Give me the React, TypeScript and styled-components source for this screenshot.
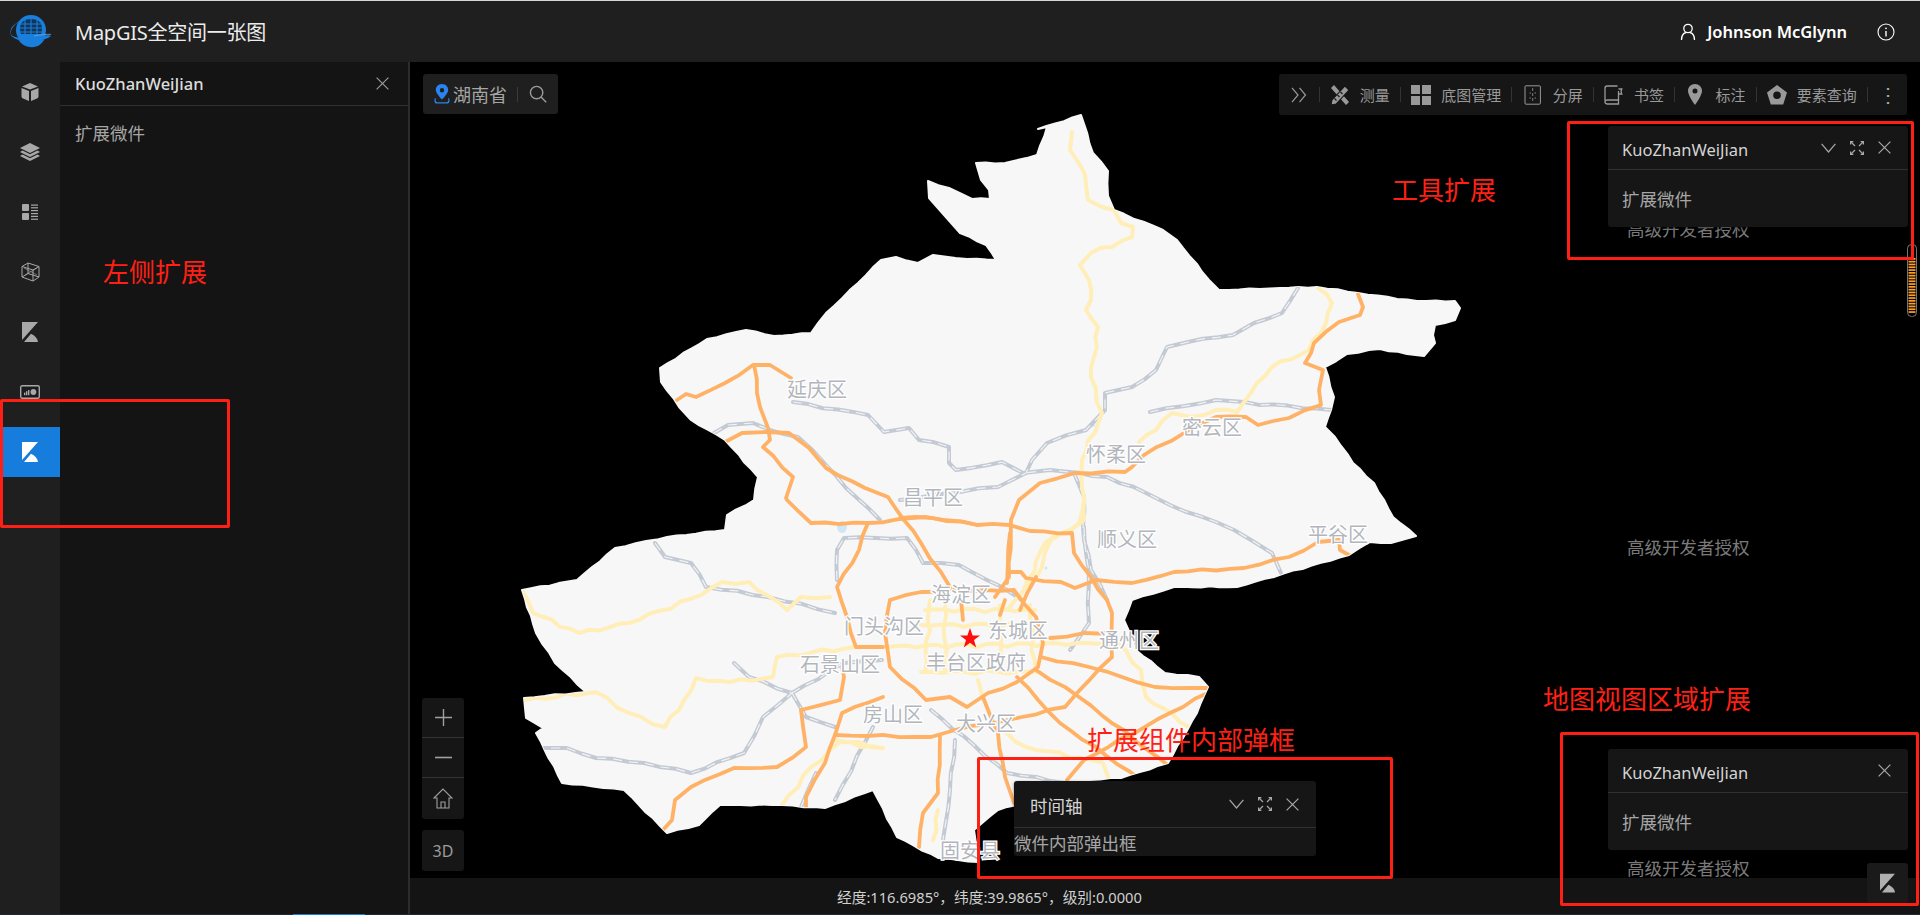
import React from "react";
import styled, { createGlobalStyle } from "styled-components";

const LAND =
  "1038,129 1081,115 1093,153 1108,171 1108,196 1114,210 1163,230 1177,240 1209,280 1219,290 1280,288 1317,287 1358,293 1417,301 1455,301 1460,308 1455,320 1435,325 1433,335 1435,343 1424,356 1407,354 1380,349 1347,354 1325,367 1334,397 1331,410 1325,427 1335,437 1353,463 1374,483 1393,517 1416,536 1391,543 1370,542 1349,555 1237,587 1174,587 1132,600 1124,620 1136,650 1165,673 1199,677 1208,687 1197,713 1168,763 1121,778 1090,780 1014,783 1017,805 998,810 974,830 978,862 938,858 897,837 873,790 825,808 782,805 720,805 699,825 667,833 624,790 562,783 536,733 543,728 526,718 524,698 586,692 555,663 536,633 522,590 577,580 615,548 667,537 725,530 727,515 754,500 758,477 725,440 691,420 679,407 661,382 660,368 707,339 746,330 774,336 811,333 826,313 858,283 881,260 896,257 918,263 933,255 967,259 996,260 986,245 960,233 944,215 929,198 928,181 949,188 972,199 990,199 989,190 981,180 976,163 1005,163 1037,155 1047,127";

const RAILS = [
  "1298,288 1282,313 1254,323 1233,335 1188,342 1167,347 1156,370 1132,387 1105,393 1105,410 1086,430 1047,443 1032,460 1026,473 998,487 960,492 900,500",
  "793,402 868,415 884,432 909,428 919,440 949,447 949,463 956,470 1002,462 1023,473 1050,470 1107,477 1146,493 1170,505 1216,522 1251,540 1272,553 1281,573",
  "1074,473 1084,497 1084,540 1091,570 1107,600",
  "714,433 728,425 753,423 770,430 798,437 826,465 846,488 880,520",
  "655,543 665,557 691,563 706,587 768,597 835,613",
  "734,663 749,677 792,693 763,717 744,753 691,773 644,763 596,758 567,748 543,748",
  "792,693 806,717 835,727",
  "792,693 844,663 882,660",
  "837,580 837,550 844,538 907,538 923,563 959,565 1002,587 1022,600",
  "955,740 950,790 943,840",
  "873,727 835,800",
  "931,710 1007,773 1065,783",
  "801,807 816,773",
  "1084,527 1089,583 1089,623 1070,650",
  "1150,412 1216,400 1331,410",
];

const YELLOW = [
  "1072,132 1070,150 1080,165 1086,185 1088,200 1102,207 1114,210 1121,223 1133,227 1132,237 1091,253 1080,265 1089,280 1091,300 1086,310 1098,327 1091,377 1102,413 1082,460 1082,487 1084,520 1051,540 1042,567 1019,597",
  "1318,288 1332,303 1326,323 1309,350 1272,367 1251,393 1237,412 1216,410 1191,417 1172,413 1156,430 1139,442",
  "522,590 533,613 579,633 629,623 701,595 722,582 749,582 787,610 801,597 830,597",
  "526,700 596,692 629,713 665,727 684,700 696,678 730,682 773,677 777,657 856,647 1117,643 1141,670 1146,697 1189,727",
  "835,740 883,748 840,742 811,767 782,805",
  "1084,500 1079,523 1045,543 1024,590 1007,610",
  "1007,733 1026,747 1103,763 1108,777",
  "978,680 983,700",
  "938,810 933,840",
  "925,610 1035,610",
  "921,625 1040,625",
  "921,672 1040,672",
  "930,600 925,672",
  "945,605 945,672",
  "1000,605 1000,672",
  "1030,605 1035,672",
];

const ORANGE = [
  "1358,294 1363,307 1360,315 1339,322 1314,343 1311,353 1305,363 1323,370 1319,390 1321,405 1289,418 1258,425 1246,417 1216,417 1184,433 1144,455 1132,467 1125,472 1075,473 1040,483 1019,500 1011,520 1009,577 995,597",
  "900,518 932,518 977,525 1009,525 1030,531 1072,533 1074,553 1091,577 1107,600 1112,613 1112,657 1077,693 1065,707 1022,717 955,730 931,737 835,735",
  "1009,572 1021,572 1026,578 1061,582 1075,588 1096,580 1132,583 1174,572 1244,568 1289,557 1318,542 1339,540 1340,550 1349,555",
  "677,400 686,394 696,397 725,383 753,365 770,365 791,378",
  "754,365 760,407 768,428 770,440 763,447 793,477 786,498 787,500 811,523 868,523 926,517 978,525",
  "725,442 742,433 767,432 789,433 809,448 826,468 865,488 888,497 921,543 950,587",
  "868,523 859,550 837,587 847,617 856,647 883,647",
  "890,600 921,592 985,590 1014,590 1036,617 1043,643 1038,667 1017,682 988,693 967,707 950,697 926,700 890,667 885,633 890,600",
  "835,735 842,713 883,697",
  "801,710 840,700 844,677 842,667",
  "801,710 806,747 777,767 734,768 691,787 675,800 672,820 663,830",
  "835,735 825,763 806,797 806,808",
  "940,737 938,793 923,813 919,847",
  "983,697 998,733 1005,777 1014,803",
  "1036,670 1079,697 1170,767",
  "1017,677 1060,723 1141,780",
  "1041,657 1089,667 1155,687 1208,688",
  "1208,693 1170,713 1084,760 1067,780",
  "1050,638 1084,633 1112,633",
  "1010,533 1007,583",
  "1036,577 1020,610",
  "961,600 963,620",
  "1005,600 1000,615",
];

const LABELS = [
  { text: "延庆区", x: 817, y: 388 },
  { text: "昌平区", x: 933, y: 496 },
  { text: "怀柔区", x: 1116, y: 453 },
  { text: "密云区", x: 1212, y: 426 },
  { text: "顺义区", x: 1127, y: 538 },
  { text: "平谷区", x: 1338, y: 533 },
  { text: "海淀区", x: 961, y: 593 },
  { text: "门头沟区", x: 884, y: 625 },
  { text: "东城区", x: 1018, y: 629 },
  { text: "通州区", x: 1129, y: 639 },
  { text: "石景山区", x: 840, y: 663 },
  { text: "丰台区政府", x: 976, y: 661 },
  { text: "房山区", x: 893, y: 713 },
  { text: "大兴区", x: 986, y: 722 },
  { text: "固安县", x: 970, y: 849 },
];

const TOOLS = [
  { label: "测量", icon: "measure" },
  { label: "底图管理", icon: "basemap" },
  { label: "分屏", icon: "split" },
  { label: "书签", icon: "bookmark" },
  { label: "标注", icon: "pin" },
  { label: "要素查询", icon: "query" },
];

const wiggle = (points: string, amp: number, step: number): string => {
  const pts = points.split(" ").map((p) => p.split(",").map(Number));
  const out: string[] = [];
  pts.forEach((pt, i) => {
    out.push(`${pt[0]},${pt[1]}`);
    const next = pts[i + 1];
    if (!next) return;
    const dx = next[0] - pt[0];
    const dy = next[1] - pt[1];
    const len = Math.hypot(dx, dy);
    const n = Math.floor(len / step);
    for (let k = 1; k < n; k++) {
      const t = k / n;
      const off = amp * Math.sin(pt[0] * 0.7 + pt[1] * 1.3 + k * 2.1) * Math.sin(Math.PI * t);
      out.push(`${(pt[0] + dx * t - (dy / len) * off).toFixed(1)},${(pt[1] + dy * t + (dx / len) * off).toFixed(1)}`);
    }
  });
  return out.join(" ");
};

const LAND_PATH = wiggle(LAND, 0.7, 9);
const RAIL_PATHS = RAILS.map((p) => wiggle(p, 1.2, 14));
const YELLOW_PATHS = YELLOW.map((p) => wiggle(p, 2.2, 10));
const ORANGE_PATHS = ORANGE.map((p) => wiggle(p, 1.2, 14));

const KIcon = ({ w = 16, h = 20 }: { w?: number; h?: number }) => (
  <svg width={w} height={h} viewBox="0 0 16 20" fill="currentColor">
    <path d="M0 0H16L0 18Z" />
    <path d="M2 20L9 11.8C13 13.6 15.6 16.4 16 20Z" />
  </svg>
);

const CubeIcon = () => (
  <svg width="18" height="18" viewBox="0 0 18 18" fill="currentColor">
    <path d="M9 0L17 3.4L9 6.6L1 3.4Z" />
    <path d="M0.5 5L8 8V18L2 15.6Q0.5 15 0.5 13.6Z" />
    <path d="M17.5 5L10 8V18L16 15.6Q17.5 15 17.5 13.6Z" />
  </svg>
);

const LayersIcon = () => (
  <svg width="20" height="18" viewBox="0 0 20 18" fill="currentColor">
    <path d="M10 0L20 5L10 10L0 5Z" />
    <path d="M2.5 7.4L10 11.2L17.5 7.4L20 9L10 14L0 9Z" />
    <path d="M2.5 11.4L10 15.2L17.5 11.4L20 13L10 18L0 13Z" />
  </svg>
);

const ListIcon = () => (
  <svg width="16" height="16" viewBox="0 0 16 16" fill="currentColor">
    <rect x="0" y="0" width="7" height="7" rx="1" />
    <rect x="0" y="9" width="7" height="7" rx="1" />
    <rect x="9" y="0.5" width="7" height="1.2" />
    <rect x="9" y="3.2" width="7" height="1.2" />
    <rect x="9" y="6" width="7" height="1.2" />
    <rect x="9" y="9" width="7" height="1.2" />
    <rect x="9" y="11.8" width="7" height="1.2" />
    <rect x="9" y="14.6" width="7" height="1.2" />
  </svg>
);

const WireCubeIcon = () => (
  <svg width="19" height="20" viewBox="0 0 19 20" fill="none" stroke="currentColor" strokeWidth="1">
    <path d="M7 1L18 4.5V15L12 19L1 15V4.5Z" />
    <path d="M1 4.5L12 8V19M12 8L18 4.5" />
    <path d="M7 1V11.5L1 15M7 11.5L18 15" />
    <path d="M3 6L16 13M16 6L4 13" strokeWidth="0.6" />
  </svg>
);

const CardIcon = () => (
  <svg width="20" height="14" viewBox="0 0 20 14" fill="currentColor">
    <rect x="0.7" y="0.7" width="18.6" height="12.6" rx="1.5" fill="#1c1c1c" stroke="currentColor" strokeWidth="1.4" />
    <rect x="4" y="7.6" width="1.4" height="2.6" />
    <rect x="6" y="6.2" width="1.4" height="4" />
    <rect x="8" y="5" width="1.4" height="5.2" />
    <circle cx="13.4" cy="7" r="2.9" />
  </svg>
);

const LogoIcon = () => (
  <svg width="42" height="34" viewBox="0 0 42 34">
    <circle cx="21" cy="15" r="15" fill="#1a7fdc" />
    <path d="M10 13C10 7 15 4 21 4S32 7 32 13C32 17 31 19 31 19H11S10 17 10 13Z" fill="#12365a" />
    <g stroke="#1a7fdc" strokeWidth="1.1">
      <path d="M10 9H32M10 13H32M10 17H32" />
      <path d="M15 4V20M21 3V20M27 4V20" />
    </g>
    <path d="M12 5C4 9 0 15 1 19C2 22 10 24 20 23C30 22 38 19 41 21C36 25 26 27 16 26C6 25 -2 22 1 14C2 11 7 7 12 5Z" fill="#1a7fdc" />
    <path d="M8 24C14 29 30 28 35 23C32 30 26 33 20 32C15 32 10 28 8 24Z" fill="#1a7fdc" />
    <path d="M24 21C30 20 36 19 41 19.4" stroke="#6aa8de" strokeWidth="0.8" fill="none" />
  </svg>
);

const UserIcon = () => (
  <svg width="16" height="18" viewBox="0 0 16 18" fill="none" stroke="#fff" strokeWidth="1.3">
    <circle cx="8" cy="5.5" r="4.2" />
    <path d="M1.5 17C1.5 12.5 4 10 6 9.5M14.5 17C14.5 12.5 12 10 10 9.5" />
  </svg>
);

const InfoIcon = () => (
  <svg width="18" height="18" viewBox="0 0 18 18" fill="none" stroke="#fff" strokeWidth="1.1">
    <circle cx="9" cy="9" r="8" />
    <path d="M9 8V13.5" strokeWidth="1.4" />
    <circle cx="9" cy="5.3" r="0.9" fill="#fff" stroke="none" />
  </svg>
);

const CloseIcon = ({ size = 13 }: { size?: number }) => (
  <svg width={size} height={size} viewBox="0 0 13 13" fill="none" stroke="currentColor" strokeWidth="1.2">
    <path d="M0.6 0.6L12.4 12.4M12.4 0.6L0.6 12.4" />
  </svg>
);

const ChevronIcon = ({ w = 15 }: { w?: number }) => (
  <svg width={w} height="10" viewBox="0 0 15 10" fill="none" stroke="currentColor" strokeWidth="1.2">
    <path d="M0.6 0.8L7.5 9L14.4 0.8" />
  </svg>
);

const ExpandIcon = () => (
  <svg width="14" height="14" viewBox="0 0 14 14" fill="none" stroke="currentColor" strokeWidth="1.2">
    <path d="M1 1L5 5M13 1L9 5M1 13L5 9M13 13L9 9" />
    <path d="M0.6 3.4V0.6H3.4M10.6 0.6H13.4V3.4M0.6 10.6V13.4H3.4M10.6 13.4H13.4V10.6" />
  </svg>
);

const PinBlueIcon = () => (
  <svg width="16" height="20" viewBox="0 0 16 20" fill="#2a84f0">
    <path fillRule="evenodd" d="M8 0C4 0 1.8 3 1.8 6C1.8 9.6 8 15.5 8 15.5S14.2 9.6 14.2 6C14.2 3 12 0 8 0ZM8 4A2.2 2.2 0 1 1 8 8.4A2.2 2.2 0 1 1 8 4Z" />
    <path d="M1 14C0 16 0 19.6 3 19.6H13C16 19.6 16 16 15 14L14 14.6C14.8 16 14.6 18.2 12.6 18.2H3.4C1.4 18.2 1.2 16 2 14.6Z" />
  </svg>
);

const SearchIcon = () => (
  <svg width="18" height="18" viewBox="0 0 18 18" fill="none" stroke="currentColor" strokeWidth="1.4">
    <circle cx="7.6" cy="7.6" r="6.2" />
    <path d="M12 12L17.2 17.2" />
  </svg>
);

const DoubleChevronIcon = () => (
  <svg width="16" height="16" viewBox="0 0 16 16" fill="none" stroke="currentColor" strokeWidth="1.2">
    <path d="M1 0.8L7 8L1 15.2M8.5 0.8L14.5 8L8.5 15.2" />
  </svg>
);

const ToolIcon = ({ name }: { name: string }) => {
  switch (name) {
    case "measure":
      return (
        <svg width="20" height="22" viewBox="0 0 20 22" fill="currentColor">
          <path d="M1 4L4 1L19 18L16 21Z" />
          <path d="M15 2L19 6L6 20L1 21L2 16Z" stroke="#161616" strokeWidth="1.1" />
          <path d="M4.5 14.5L6.5 16.5M7.5 11L9.5 13M10.5 8L12.5 10" stroke="#161616" strokeWidth="1.1" />
        </svg>
      );
    case "basemap":
      return (
        <svg width="20" height="20" viewBox="0 0 20 20" fill="currentColor">
          <rect width="9" height="9" />
          <rect x="11" width="9" height="9" />
          <rect y="11" width="9" height="9" />
          <rect x="11" y="11" width="9" height="9" />
        </svg>
      );
    case "split":
      return (
        <svg width="18" height="20" viewBox="0 0 18 20" fill="none" stroke="currentColor" strokeWidth="1">
          <rect x="1" y="0.8" width="15.4" height="18.4" rx="1" />
          <path d="M8.7 3V6M8.7 8V11M8.7 13V16M5.5 8H7M10.5 8H12M5.5 13H7M10.5 13H12" strokeWidth="0.8" />
        </svg>
      );
    case "bookmark":
      return (
        <svg width="20" height="20" viewBox="0 0 20 20" fill="none" stroke="currentColor" strokeWidth="1.3">
          <path d="M13.5 1H3.2Q1 1 1 3.2V16.5Q1 19 3.5 19H14.5V15H3.5Q1 15 1 16.8" />
          <path d="M14.5 15V6M14.5 4H17.8L17 6.5L17.8 9H14.5" />
        </svg>
      );
    case "pin":
      return (
        <svg width="14" height="21" viewBox="0 0 14 21" fill="currentColor">
          <path fillRule="evenodd" d="M7 0C3 0 0 3 0 7C0 11.5 7 21 7 21S14 11.5 14 7C14 3 11 0 7 0ZM7 4.5A2.5 2.5 0 1 1 7 9.5A2.5 2.5 0 1 1 7 4.5Z" />
        </svg>
      );
    default:
      return (
        <svg width="20" height="20" viewBox="0 0 20 20" fill="currentColor">
          <path fillRule="evenodd" d="M10 0L20 7.4L16.2 19.6H3.8L0 7.4ZM10 6.4A3.8 3.8 0 1 0 10 14A3.8 3.8 0 1 0 10 6.4Z" />
        </svg>
      );
  }
};

const Annotation = ({ children, x, y }: { children: string; x: number; y: number }) => (
  <RedLabel $x={x} $y={y}>
    {children}
  </RedLabel>
);

const App: React.FC = () => {
  return (
    <Page>
      <GlobalStyle />
      <Header>
        <LogoSlot>
          <LogoIcon />
        </LogoSlot>
        <AppTitle>MapGIS全空间一张图</AppTitle>
        <UserBox>
          <UserIcon />
          <UserName>Johnson McGlynn</UserName>
          <InfoIcon />
        </UserBox>
      </Header>
      <Body>
        <Rail>
          <RailItem><CubeIcon /></RailItem>
          <RailItem><LayersIcon /></RailItem>
          <RailItem><ListIcon /></RailItem>
          <RailItem><WireCubeIcon /></RailItem>
          <RailItem><KIcon /></RailItem>
          <RailItem><CardIcon /></RailItem>
          <RailItem $active><KIcon /></RailItem>
        </Rail>
        <SidePanel>
          <SideHead>
            <SideTitle>KuoZhanWeiJian</SideTitle>
            <CloseIcon />
          </SideHead>
          <SideBody>扩展微件</SideBody>
        </SidePanel>
        <MapArea>
          <MapSvg width="1510" height="816" viewBox="410 62 1510 816">
            <defs>
              <clipPath id="land">
                <polygon points={LAND_PATH} />
              </clipPath>
            </defs>
            <polygon points={LAND_PATH} fill="#f7f7f8" stroke="#f7f7f8" strokeLinejoin="round" strokeWidth="2" />
            <g clipPath="url(#land)" fill="none" strokeLinejoin="round" strokeLinecap="round">
              <ellipse cx="842" cy="527" rx="5" ry="6" fill="#cfe6f5" />
              <circle cx="1046" cy="568" r="1.5" fill="#cfe6f5" />
              <circle cx="1093" cy="425" r="2" fill="#cfe6f5" />
              {RAIL_PATHS.map((p) => (
                <polyline key={p} points={p} stroke="#c4cad3" strokeWidth="4" />
              ))}
              {RAIL_PATHS.map((p) => (
                <polyline key={p} points={p} stroke="#f2f3f5" strokeWidth="1.2" strokeDasharray="9 7" strokeLinecap="butt" />
              ))}
              {YELLOW_PATHS.map((p) => (
                <polyline key={p} points={p} stroke="#ffeeb8" strokeWidth="4" />
              ))}
              {ORANGE_PATHS.map((p) => (
                <polyline key={p} points={p} stroke="#ffb266" strokeWidth="3.8" />
              ))}
            </g>
            {LABELS.map((l) => (
              <MapLabel key={l.text} x={l.x} y={l.y}>
                {l.text}
              </MapLabel>
            ))}
            <polygon
              points="970,628 972.6,635.4 980,635.4 974,640 976.2,647.4 970,642.8 963.8,647.4 966,640 960,635.4 967.4,635.4"
              fill="#ff0d0d"
            />
          </MapSvg>

          <Watermark $top={155}>高级开发者授权</Watermark>
          <Watermark $top={473}>高级开发者授权</Watermark>
          <Watermark $top={794}>高级开发者授权</Watermark>

          <SearchBox>
            <PinBlueIcon />
            <RegionName>湖南省</RegionName>
            <SearchDivider />
            <SearchIcon />
          </SearchBox>

          <Toolbar>
            <ToolEdge $w={40}><DoubleChevronIcon /></ToolEdge>
            {TOOLS.map((t) => (
              <React.Fragment key={t.label}>
                <ToolSep />
                <ToolItem>
                  <ToolGlyph><ToolIcon name={t.icon} /></ToolGlyph>
                  {t.label}
                </ToolItem>
              </React.Fragment>
            ))}
            <ToolSep />
            <ToolEdge $w={39}><Dots>⋮</Dots></ToolEdge>
          </Toolbar>

          <ScaleBar>
            <svg width="10" height="73" viewBox="0 0 10 73">
              <rect x="0.5" y="0.5" width="9" height="72" rx="4" fill="#000" stroke="#777" />
              {Array.from({ length: 20 }).map((_, i) => (
                <rect key={i} x="1.5" y={14 + i * 2.8} width="7" height="1.7" fill="#ffa02b" />
              ))}
            </svg>
          </ScaleBar>

          <FloatPanel $left={1198} $top={64} $w={300}>
            <FloatHead $h={44}>
              <FloatTitle $size={16.5}>KuoZhanWeiJian</FloatTitle>
              <HeadIcons>
                <ChevronIcon />
                <ExpandIcon />
                <CloseIcon />
              </HeadIcons>
            </FloatHead>
            <FloatBody $h={57}>扩展微件</FloatBody>
          </FloatPanel>

          <FloatPanel $left={1198} $top={687} $w={300}>
            <FloatHead $h={44}>
              <FloatTitle $size={16.5}>KuoZhanWeiJian</FloatTitle>
              <HeadIcons>
                <CloseIcon />
              </HeadIcons>
            </FloatHead>
            <FloatBody $h={57}>扩展微件</FloatBody>
          </FloatPanel>

          <FloatPanel $left={604} $top={719} $w={302}>
            <FloatHead $h={47} $inset={16}>
              <FloatTitle $size={17.5}>时间轴</FloatTitle>
              <HeadIcons>
                <ChevronIcon />
                <ExpandIcon />
                <CloseIcon />
              </HeadIcons>
            </FloatHead>
            <FloatBody $h={28} $flush>微件内部弹出框</FloatBody>
          </FloatPanel>

          <ZoomGroup>
            <ZoomCell $h={39}>
              <svg width="17" height="17" viewBox="0 0 17 17" stroke="currentColor" strokeWidth="1.4">
                <path d="M8.5 0V17M0 8.5H17" />
              </svg>
            </ZoomCell>
            <ZoomCell $h={40} $divided>
              <svg width="17" height="3" viewBox="0 0 17 3" stroke="currentColor" strokeWidth="1.6">
                <path d="M0 1.5H17" />
              </svg>
            </ZoomCell>
            <ZoomCell $h={42} $divided>
              <svg width="20" height="21" viewBox="0 0 20 21" fill="none" stroke="currentColor" strokeWidth="1.1">
                <path d="M1 10L10 1L19 10H16V20H4V10Z" />
                <path d="M8 20V14H12V20" />
              </svg>
            </ZoomCell>
          </ZoomGroup>
          <ThreeDButton>3D</ThreeDButton>
          <CornerButton><KIcon w={15} h={20} /></CornerButton>

          <StatusBar>经度:116.6985°，纬度:39.9865°，级别:0.0000</StatusBar>
        </MapArea>
      </Body>
      <EdgeStrip>
        <EdgeMark />
      </EdgeStrip>

      <RedBox $x={0} $y={399} $w={230} $h={129} />
      <RedBox $x={1567} $y={121} $w={347} $h={139} />
      <RedBox $x={1560} $y={732} $w={359} $h={174} />
      <RedBox $x={977} $y={757} $w={416} $h={122} />
      <Annotation x={103} y={255}>左侧扩展</Annotation>
      <Annotation x={1392} y={173}>工具扩展</Annotation>
      <Annotation x={1543} y={682}>地图视图区域扩展</Annotation>
      <Annotation x={1087} y={723}>扩展组件内部弹框</Annotation>
    </Page>
  );
};

export default App;

const GlobalStyle = createGlobalStyle`
  html, body {
    margin: 0;
    padding: 0;
    background: #000;
    overflow: hidden;
  }
  * {
    box-sizing: border-box;
  }
`;

const Page = styled.div`
  position: relative;
  width: 1920px;
  height: 915px;
  display: flex;
  flex-direction: column;
  border-top: 1px solid #d6d6d6;
  overflow: hidden;
  font-family: "Noto Sans", "Noto Sans CJK SC", sans-serif;
`;

const Header = styled.header`
  height: 61px;
  flex: none;
  display: flex;
  align-items: center;
  background: #1f1f1f;
`;

const LogoSlot = styled.div`
  width: 75px;
  padding-left: 10px;
  display: flex;
  align-items: center;
`;

const AppTitle = styled.div`
  font-size: 20px;
  letter-spacing: -0.25px;
  color: #ececec;
  white-space: nowrap;
`;

const UserBox = styled.div`
  margin-left: auto;
  padding-right: 25px;
  display: flex;
  align-items: center;
  color: #fff;
`;

const UserName = styled.span`
  font-size: 16.5px;
  font-weight: 600;
  margin: 0 30px 0 11px;
  white-space: nowrap;
`;

const Body = styled.div`
  flex: 1;
  min-height: 0;
  display: flex;
`;

const Rail = styled.nav`
  width: 60px;
  flex: none;
  padding-top: 5px;
  display: flex;
  flex-direction: column;
  gap: 10px;
  background: #1f1f1f;
`;

const RailItem = styled.div<{ $active?: boolean }>`
  height: 50px;
  display: flex;
  align-items: center;
  justify-content: center;
  color: ${(p) => (p.$active ? "#fff" : "#a8a8a8")};
  background: ${(p) => (p.$active ? "#177ddc" : "transparent")};
`;

const SidePanel = styled.aside`
  width: 350px;
  flex: none;
  background: #141414;
  border-right: 2px solid #2c2c2c;
`;

const SideHead = styled.div`
  height: 44px;
  padding: 0 19px 0 15px;
  display: flex;
  align-items: center;
  justify-content: space-between;
  border-bottom: 1px solid #303030;
  color: #999;
`;

const SideTitle = styled.div`
  font-size: 16.5px;
  font-weight: 500;
  color: #dcdcdc;
`;

const SideBody = styled.div`
  padding: 15px 15px;
  font-size: 17.5px;
  line-height: 24px;
  color: #a6a6a6;
`;

const MapArea = styled.main`
  position: relative;
  flex: 1;
  min-width: 0;
  display: flex;
  flex-direction: column;
  justify-content: flex-end;
  background: #000;
`;

const MapSvg = styled.svg`
  position: absolute;
  top: 0;
  left: 0;
`;

const MapLabel = styled.text`
  font-family: "Noto Sans CJK SC", sans-serif;
  font-size: 20px;
  text-anchor: middle;
  dominant-baseline: central;
  fill: #b2b6bc;
  stroke: #fff;
  stroke-width: 2.5px;
  paint-order: stroke;
`;

const StatusBar = styled.footer`
  height: 36px;
  flex: none;
  padding-left: 427px;
  display: flex;
  align-items: center;
  background: #141414;
  color: #d0d0d0;
  font-size: 14.7px;
  white-space: nowrap;
`;

const EdgeStrip = styled.div`
  height: 1px;
  flex: none;
  background: #1d2a33;
`;

const EdgeMark = styled.div`
  width: 72px;
  height: 1px;
  margin-left: 293px;
  background: #177ddc;
`;

const Watermark = styled.div<{ $top: number }>`
  position: absolute;
  left: 1217px;
  top: ${(p) => p.$top}px;
  font-size: 17.5px;
  line-height: 24px;
  color: #7a7a7a;
  white-space: nowrap;
`;

const SearchBox = styled.div`
  position: absolute;
  left: 13px;
  top: 12px;
  width: 135px;
  height: 40px;
  padding-left: 11px;
  display: flex;
  align-items: center;
  background: #1f1f1f;
  border-radius: 3px;
  color: #9c9c9c;
`;

const RegionName = styled.span`
  margin-left: 3px;
  font-size: 18px;
  color: #a6a6a6;
`;

const SearchDivider = styled.span`
  width: 1px;
  height: 15px;
  margin: 0 11px 0 10px;
  background: #3a3a3a;
`;

const Toolbar = styled.div`
  position: absolute;
  right: 13px;
  top: 12px;
  height: 41px;
  display: flex;
  align-items: center;
  background: #161616;
  border-radius: 3px;
  color: #999;
`;

const ToolEdge = styled.div<{ $w: number }>`
  width: ${(p) => p.$w}px;
  display: flex;
  justify-content: center;
  align-items: center;
`;

const Dots = styled.span`
  font-size: 20px;
  line-height: 1;
  color: #aaa;
`;

const ToolSep = styled.span`
  width: 1px;
  height: 15px;
  flex: none;
  background: #333;
`;

const ToolItem = styled.div`
  padding: 0 10.2px;
  display: flex;
  align-items: center;
  gap: 10px;
  font-size: 15px;
  white-space: nowrap;
`;

const ToolGlyph = styled.span`
  width: 20px;
  height: 22px;
  display: flex;
  align-items: center;
  justify-content: center;
`;

const ScaleBar = styled.div`
  position: absolute;
  left: 1497px;
  top: 182px;
  line-height: 0;
`;

const FloatPanel = styled.section<{ $left: number; $top: number; $w: number }>`
  position: absolute;
  left: ${(p) => p.$left}px;
  top: ${(p) => p.$top}px;
  width: ${(p) => p.$w}px;
  background: #161616;
  border-radius: 3px;
  box-shadow: 0 1px 3px rgba(0, 0, 0, 0.5);
`;

const FloatHead = styled.div<{ $h: number; $inset?: number }>`
  height: ${(p) => p.$h}px;
  padding: 3px 17px 0 ${(p) => p.$inset ?? 14}px;
  display: flex;
  align-items: center;
  justify-content: space-between;
  border-bottom: 1px solid #303030;
`;

const FloatTitle = styled.div<{ $size: number }>`
  font-size: ${(p) => p.$size}px;
  color: #d4d4d4;
  white-space: nowrap;
`;

const HeadIcons = styled.div`
  display: flex;
  align-items: center;
  gap: 14px;
  margin-top: -3px;
  color: #a8a8a8;
`;

const FloatBody = styled.div<{ $h: number; $flush?: boolean }>`
  height: ${(p) => p.$h}px;
  padding-left: ${(p) => (p.$flush ? 0 : 14)}px;
  display: flex;
  align-items: center;
  font-size: 17.5px;
  color: #a6a6a6;
  white-space: nowrap;
`;

const ZoomGroup = styled.div`
  position: absolute;
  left: 12px;
  top: 636px;
  width: 42px;
  background: #161616;
  border-radius: 3px;
  color: #a0a0a0;
`;

const ZoomCell = styled.div<{ $h: number; $divided?: boolean }>`
  height: ${(p) => p.$h}px;
  display: flex;
  align-items: center;
  justify-content: center;
  border-top: ${(p) => (p.$divided ? "1px solid #333" : "none")};
`;

const ThreeDButton = styled.div`
  position: absolute;
  left: 12px;
  top: 768px;
  width: 42px;
  height: 41px;
  display: flex;
  align-items: center;
  justify-content: center;
  background: #161616;
  border-radius: 3px;
  font-size: 16px;
  color: #9c9c9c;
`;

const CornerButton = styled.div`
  position: absolute;
  left: 1457px;
  top: 801px;
  width: 41px;
  height: 40px;
  display: flex;
  align-items: center;
  justify-content: center;
  background: #1a1a1a;
  border-radius: 3px;
  color: #b0b0b0;
`;

const RedBox = styled.div<{ $x: number; $y: number; $w: number; $h: number }>`
  position: absolute;
  left: ${(p) => p.$x}px;
  top: ${(p) => p.$y - 1}px;
  width: ${(p) => p.$w}px;
  height: ${(p) => p.$h}px;
  border: 3px solid #ff2015;
  border-radius: 2px;
  pointer-events: none;
`;

const RedLabel = styled.div<{ $x: number; $y: number }>`
  position: absolute;
  left: ${(p) => p.$x}px;
  top: ${(p) => p.$y - 1}px;
  font-family: "Noto Sans CJK SC", sans-serif;
  font-size: 26px;
  line-height: 32px;
  color: #ff2015;
  white-space: nowrap;
`;
